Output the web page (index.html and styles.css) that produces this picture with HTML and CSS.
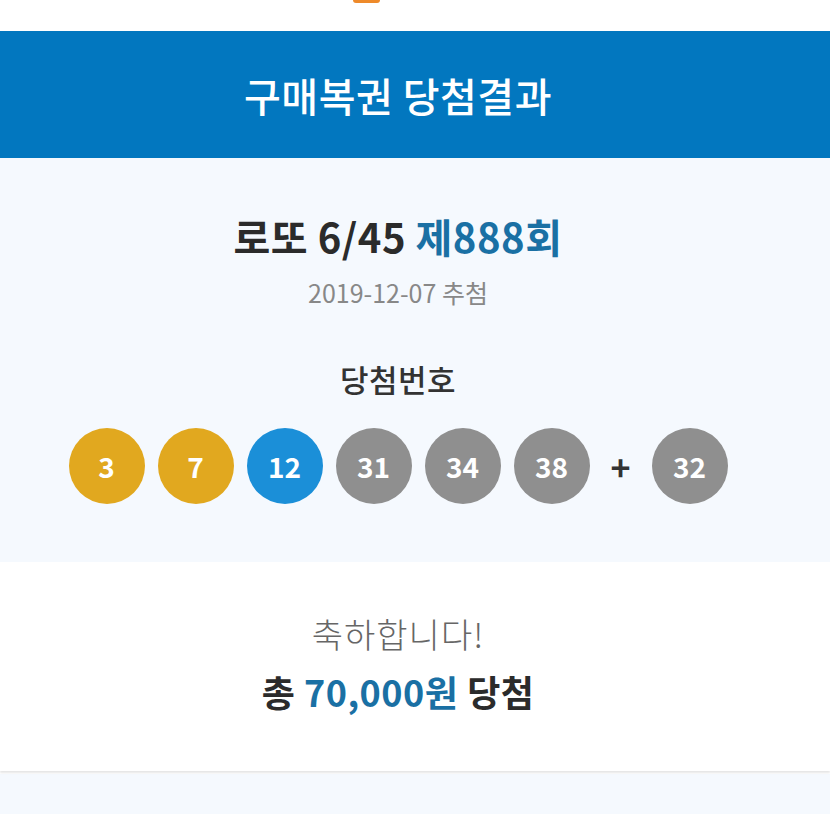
FILE: index.html
```html
<!DOCTYPE html>
<html>
<head>
  <title>구매복권 당첨결과</title>
  <link rel="stylesheet" href="styles.css">
</head>
<body>
  <div class="topbar">
    <div class="logo-tip"></div>
  </div>

  <div class="header">
    <h1>구매복권 당첨결과</h1>
  </div>

  <div class="draw">
    <h2 class="draw-title">로또 6/45 <span class="accent">제888회</span></h2>
    <p class="draw-date">2019-12-07 추첨</p>

    <h3 class="numbers-label">당첨번호</h3>
    <div class="balls">
      <span class="ball yellow">3</span>
      <span class="ball yellow">7</span>
      <span class="ball blue">12</span>
      <span class="ball gray">31</span>
      <span class="ball gray">34</span>
      <span class="ball gray">38</span>
      <span class="plus">+</span>
      <span class="ball gray">32</span>
    </div>
  </div>

  <div class="result">
    <p class="congrats">축하합니다!</p>
    <p class="prize">총 <span class="accent">70,000원</span> 당첨</p>
  </div>

  <div class="strip"></div>
</body>
</html>
```

FILE: styles.css
```css
body {
  margin: 0;
  font-family: "Noto Sans CJK KR", "Noto Sans", sans-serif;
  background-color: #fff;
  color: #333;
}

.topbar {
  height: 31px;
  padding-left: 353px;
}

.logo-tip {
  width: 27px;
  height: 3px;
  background-color: #ee8a2a;
  border-radius: 0 0 8px 8px;
}

.header {
  height: 127px;
  padding-right: 34px;
  background-color: #0277bf;
  display: flex;
  align-items: center;
  justify-content: center;
}

.header h1 {
  margin: 0;
  color: #fff;
  font-size: 40px;
  font-weight: 500;
  letter-spacing: 0.5px;
}

.draw {
  height: 404px;
  box-sizing: border-box;
  padding: 50px 34px 0 0;
  background-color: #f5f9fe;
  text-align: center;
}

.draw-title {
  margin: 0;
  font-size: 40px;
  font-weight: 700;
  line-height: 56px;
  letter-spacing: 0.5px;
  color: #2b2b2b;
}

.accent {
  color: #1a70a4;
}

.draw-date {
  margin: 11px 0 0;
  font-size: 25px;
  line-height: 34px;
  color: #888;
}

.numbers-label {
  margin: 50px 0 0;
  font-size: 31px;
  font-weight: 500;
  line-height: 40px;
  letter-spacing: 0.5px;
  color: #333;
}

.balls {
  display: flex;
  justify-content: center;
  align-items: center;
  gap: 13px;
  margin-top: 29px;
}

.ball {
  width: 76px;
  height: 76px;
  border-radius: 50%;
  display: flex;
  align-items: center;
  justify-content: center;
  color: #fff;
  font-size: 28px;
  font-weight: 700;
}

.yellow {
  background-color: #e1a81f;
}

.blue {
  background-color: #1b8fd8;
}

.gray {
  background-color: #8f8f8f;
}

.plus {
  width: 24px;
  margin: 0 6px;
  font-size: 34px;
  font-weight: 700;
  color: #333;
}

.result {
  height: 209px;
  box-sizing: border-box;
  padding: 49px 34px 0 0;
  background-color: #fff;
  text-align: center;
  box-shadow: 0 2px 2px rgba(0, 0, 0, 0.1);
  position: relative;
}

.congrats {
  margin: 0;
  font-size: 34px;
  font-weight: 300;
  line-height: 46px;
  letter-spacing: 1px;
  color: #666;
}

.prize {
  margin: 11px 0 0;
  font-size: 36px;
  font-weight: 700;
  line-height: 46px;
  letter-spacing: 0.5px;
  color: #2b2b2b;
}

.strip {
  height: 40px;
  margin-top: 3px;
  background-color: #f5f9fe;
}
```
